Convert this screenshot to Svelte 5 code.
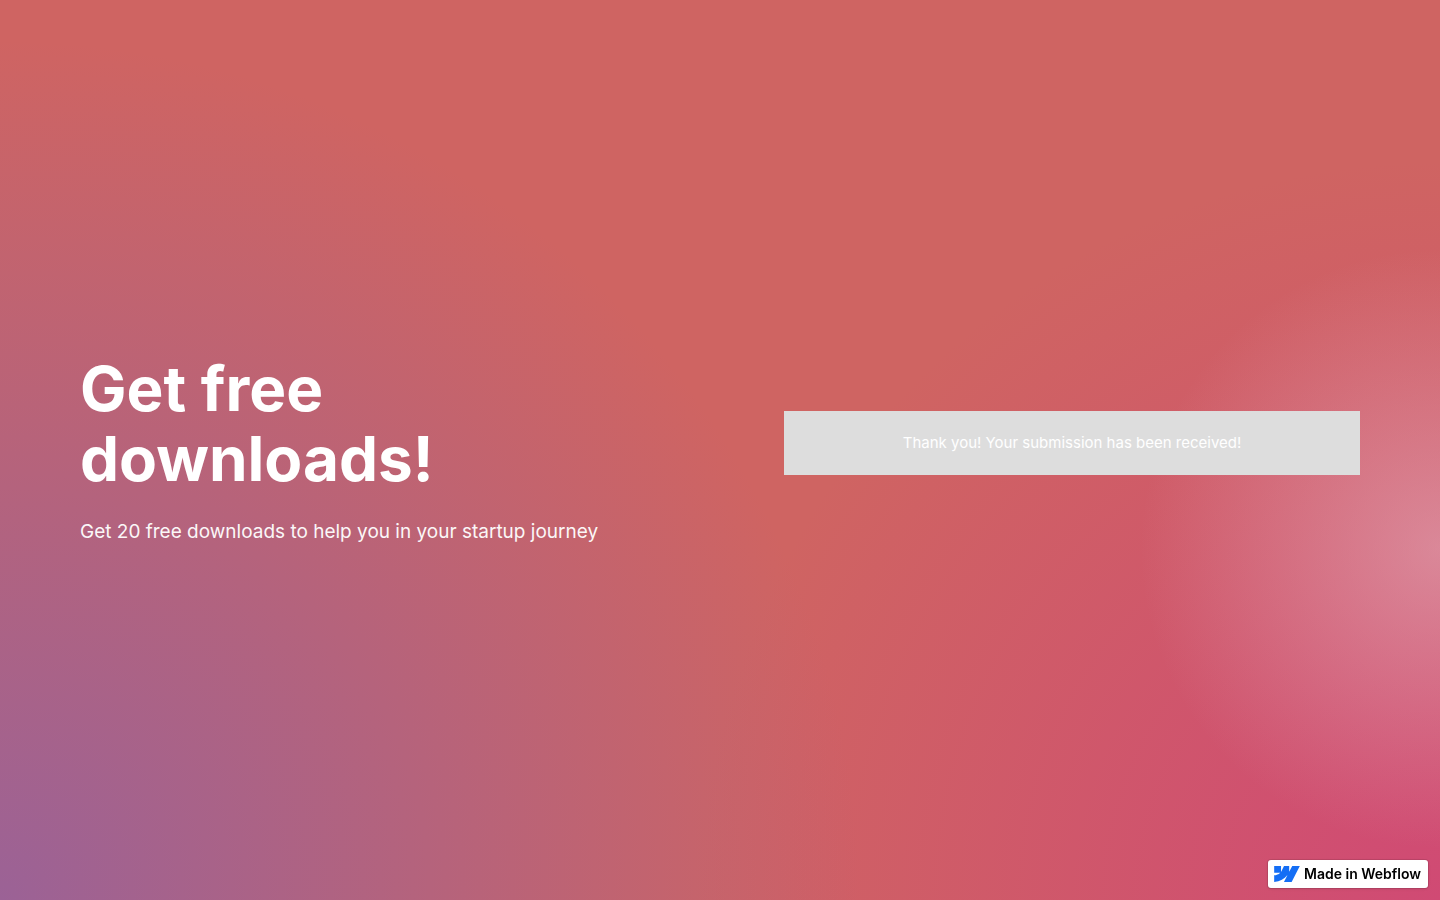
<script>
    export let heading = 'Get free downloads!';
    export let subheading = 'Get 20 free downloads to help you in your startup journey';
    export let success_message = 'Thank you! Your submission has been received!';
</script>

<svelte:head>
    <title>{heading}</title>
</svelte:head>

<main class="page">
    <section class="hero">
        <div class="intro">
            <h1>{heading}</h1>
            <p>{subheading}</p>
        </div>
        <div class="form-block">
            <div class="success" role="status">{success_message}</div>
        </div>
    </section>
</main>

<a class="badge" href="https://webflow.com">
    <svg viewBox="0 0 1080 674" aria-hidden="true">
        <path d="M1080 0L735.386 673.684H411.695L555.916 394.481H549.445C430.464 548.934 252.942 650.61 0 673.684V398.344C0 398.344 161.813 388.787 256.938 288.776H0V0H288.771V237.515L295.252 237.489L413.254 0H631.644V236.009L638.126 235.999L760.555 0H1080Z" />
    </svg>
    <span>Made in Webflow</span>
</a>

<style>
    :global(body) {
        margin: 0;
    }
    .page {
        display: flex;
        min-height: 100vh;
        font-family: Inter, "Liberation Sans", sans-serif;
        color: #fff;
        background-color: #cf6462;
        background-image:
            radial-gradient(circle 300px at 100% 61%, rgba(230, 190, 202, .48), rgba(226, 150, 165, 0)),
            radial-gradient(circle 860px at 0 100%, #9b6296, rgba(205, 92, 94, 0)),
            radial-gradient(circle 740px at 100% 100%, #d04a74, rgba(206, 92, 96, 0));
    }
    .hero {
        display: grid;
        flex: 1;
        grid-template-columns: 1fr 1fr;
        gap: 128px;
        align-items: center;
        padding: 48px 80px;
    }
    h1 {
        max-width: 480px;
        margin: 0 0 24px;
        font-size: 62px;
        font-weight: 700;
        line-height: 70px;
    }
    p {
        margin: 0;
        font-size: 19px;
        line-height: 28px;
        opacity: .95;
    }
    .form-block {
        margin-bottom: 15px;
    }
    .success {
        padding: 20px;
        font-size: 15px;
        line-height: 24px;
        text-align: center;
        background: #ddd;
    }
    .badge {
        position: fixed;
        right: 12px;
        bottom: 12px;
        display: flex;
        gap: 4px;
        align-items: center;
        padding: 6px 7px 6px 6px;
        border-radius: 3px;
        font-family: Inter, "Liberation Sans", sans-serif;
        font-size: 14px;
        font-weight: 600;
        line-height: 16px;
        color: #000;
        text-decoration: none;
        background: #fff;
        box-shadow: 0 0 0 1px rgba(0, 0, 0, .1), 0 1px 3px rgba(0, 0, 0, .1);
    }
    .badge svg {
        width: 26px;
        height: 16px;
        fill: #146ef5;
    }
</style>
